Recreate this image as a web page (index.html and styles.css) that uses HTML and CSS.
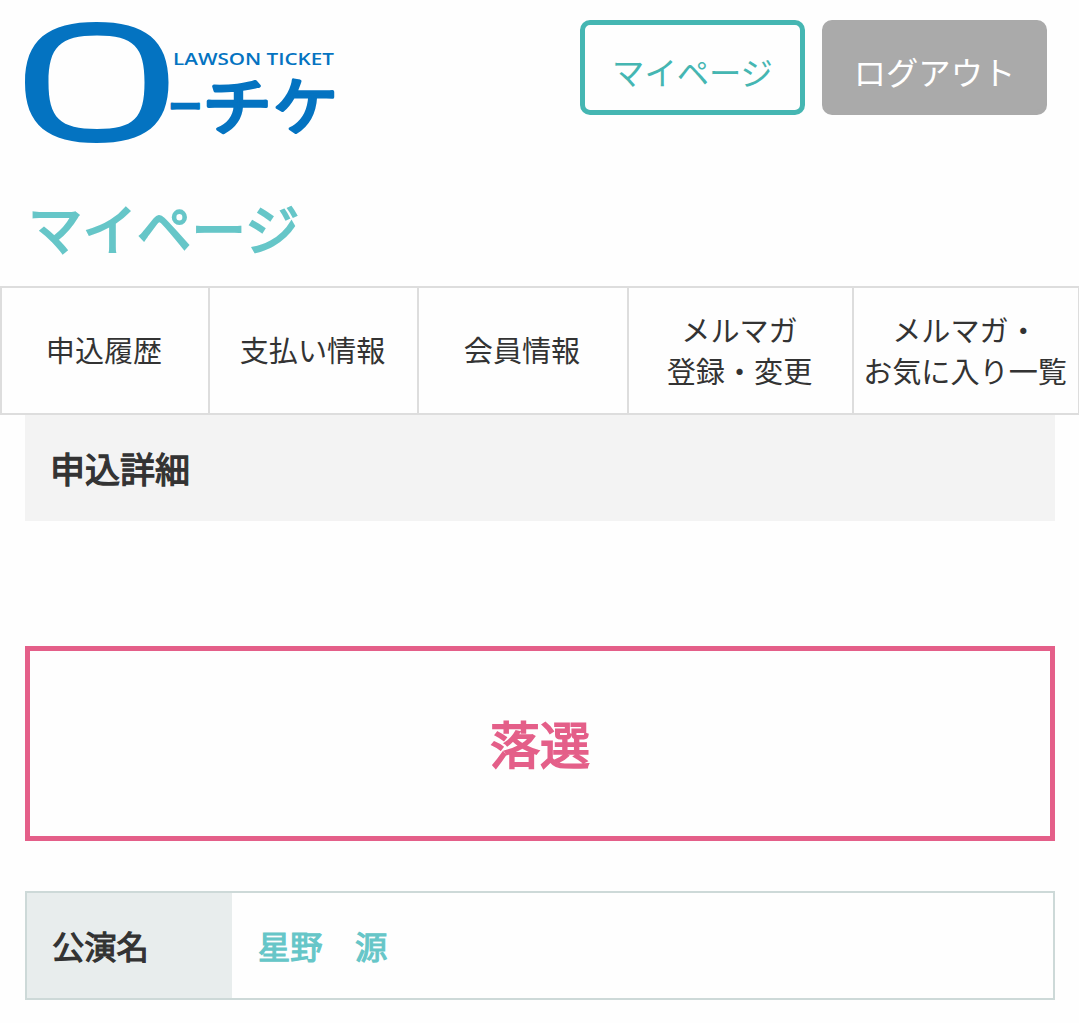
FILE: index.html
```html
<!DOCTYPE html>
<html lang="ja">
<head>
<meta charset="utf-8">
<title>マイページ</title>
<link rel="stylesheet" href="styles.css">
</head>
<body>
<header class="header">
  <a class="logo">
    <svg width="310" height="124" viewBox="25 21 310 124">
      <path class="logo-ring" fill-rule="evenodd" d="M96.500 22C145 22 168.500 40 168.500 82.500S145 143 96.500 143S25 125 25 82.500S48 22 96.500 22ZM97 35.500C60 35.500 48.500 47 48.500 82.500S60 129 97 129S144.500 118 144.500 82.500S134 35.500 97 35.500Z"/>
      <text class="logo-latin" x="173" y="65" textLength="161" lengthAdjust="spacingAndGlyphs">LAWSON TICKET</text>
      <text class="logo-kana" transform="translate(168 125) scale(.53 .75)">ー</text>
      <text class="logo-kana" transform="translate(202.500 129.500) scale(1.07 .96)">チ</text>
      <text class="logo-kana" transform="translate(273 129.500) scale(1 .96)">ケ</text>
    </svg>
  </a>
  <div class="buttons">
    <a class="button button-mypage">マイページ</a>
    <a class="button button-logout">ログアウト</a>
  </div>
</header>
<h1 class="title">マイページ</h1>
<nav class="tabs">
  <a class="tab">申込履歴</a>
  <a class="tab">支払い情報</a>
  <a class="tab">会員情報</a>
  <a class="tab">メルマガ<br>登録・変更</a>
  <a class="tab">メルマガ・<br>お気に入り一覧</a>
</nav>
<main class="content">
  <h2 class="section-title">申込詳細</h2>
  <p class="result">落選</p>
  <dl class="detail">
    <dt class="detail-label">公演名</dt>
    <dd class="detail-value">星野　源</dd>
  </dl>
</main>
</body>
</html>
```
FILE: styles.css
```css
* {
  box-sizing: border-box;
}

body {
  margin: 0;
  background: #fefefe;
  color: #333;
  font-family: "Noto Sans CJK JP", sans-serif;
}

.header {
  display: flex;
  justify-content: space-between;
  align-items: flex-start;
  height: 180px;
  padding: 20px 32px 0 25px;
}

.logo svg {
  display: block;
  margin-top: 1px;
}

.logo-ring {
  fill: #0473c1;
}

.logo-latin {
  fill: #0473c1;
  font: 600 17px "Open Sans", sans-serif;
}

.logo-kana {
  fill: #0473c1;
  stroke: #0473c1;
  stroke-width: 3.500px;
  stroke-linejoin: round;
  font-size: 65px;
}

.buttons {
  display: flex;
  gap: 17px;
}

.button {
  width: 225px;
  height: 95px;
  padding-top: 6px;
  border: 5px solid #aaa;
  border-radius: 10px;
  font-size: 32.300px;
  line-height: 80px;
  text-align: center;
}

.button-mypage {
  border-color: #45b6b2;
  color: #45b6b2;
}

.button-logout {
  background: #aaa;
  color: #fff;
}

.title,
.section-title,
.result,
.detail {
  font-weight: 400;
  -webkit-text-stroke: .036em currentColor;
}

.title {
  height: 106px;
  margin: 0;
  padding-left: 28px;
  color: #66c6c8;
  font-size: 54.500px;
  line-height: 94px;
}

.tabs {
  display: grid;
  grid-template-columns: 210px 209px 210px 225px 226px;
  width: 1079px;
  height: 129px;
  overflow: hidden;
  border: solid #ddd;
  border-width: 2px 0;
}

.tab {
  display: flex;
  align-items: center;
  justify-content: center;
  padding: 0 2px 2px 0;
  border-right: 2px solid #ddd;
  font-size: 29.100px;
  line-height: 41px;
  text-align: center;
  white-space: nowrap;
}

.tab:first-child {
  border-left: 2px solid #ddd;
}

.content {
  margin: 0 24px 0 25px;
}

.section-title {
  height: 106px;
  margin: 0;
  padding-left: 25px;
  background: #f3f3f3;
  font-size: 35px;
  line-height: 105px;
}

.result {
  height: 195px;
  margin: 125px 0 50px;
  border: 5px solid #e45f89;
  color: #e45f89;
  font-size: 50px;
  line-height: 183px;
  text-align: center;
}

.detail {
  display: grid;
  grid-template-columns: 205px 1fr;
  height: 109px;
  margin: 0;
  border: 2px solid #cdd9d8;
  font-size: 32.300px;
  line-height: 105px;
}

.detail-label {
  padding-left: 25px;
  background: #e8eded;
}

.detail-value {
  margin: 0;
  padding-left: 26px;
  color: #66c6c8;
}
```
